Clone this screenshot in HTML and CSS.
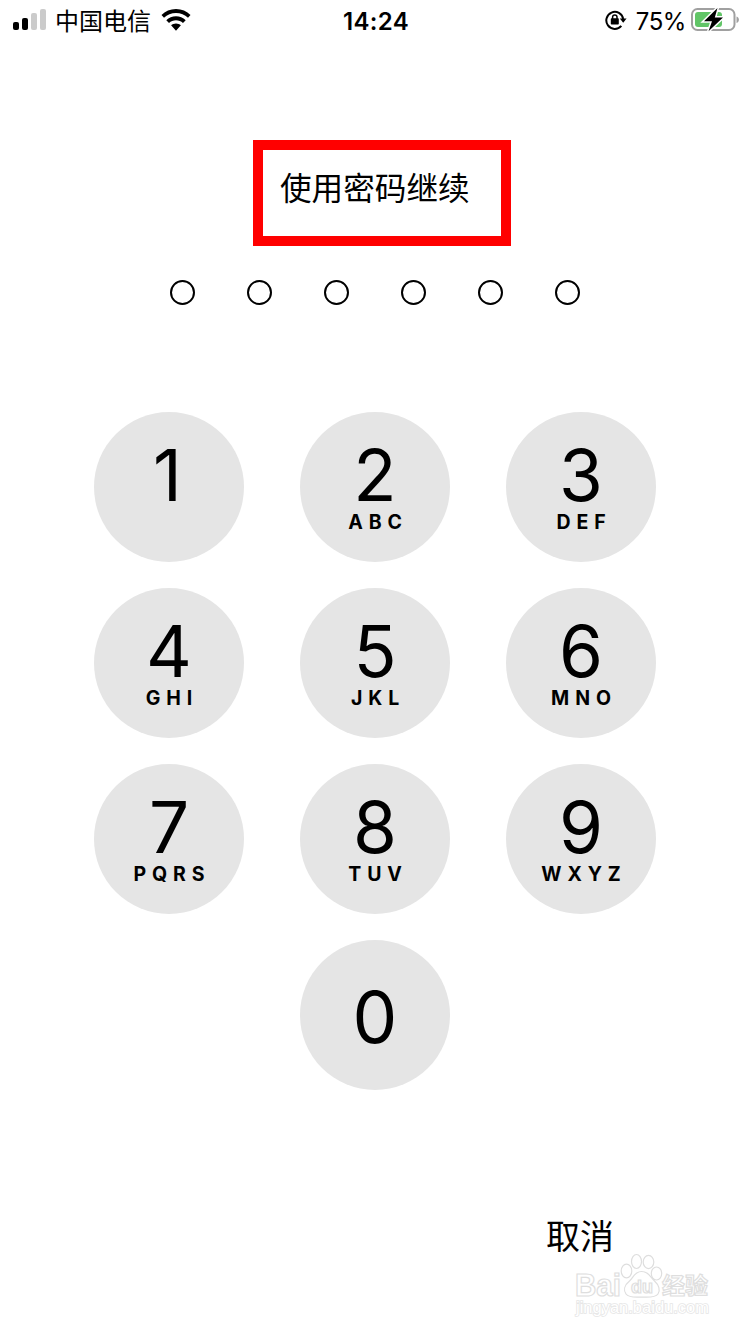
FILE: index.html
```
<!DOCTYPE html>
<html lang="zh-CN">
<head>
    <meta charset="UTF-8">
    <meta name="viewport" content="width=device-width, initial-scale=1.0">
    <title>使用密码继续</title>
    <link rel="stylesheet" href="styles.css">
</head>
<body>

    <header class="status-bar">
        <div class="status-left">
            <div class="signal">
                <span class="bar bar1"></span>
                <span class="bar bar2"></span>
                <span class="bar bar3 off"></span>
                <span class="bar bar4 off"></span>
            </div>
            <span class="carrier">中国电信</span>
            <svg class="wifi" width="30" height="22" viewBox="0 0 30 22">
                <path d="M15 0C9.300 0 4.200 2.200.5 5.900L3 8.800C6.200 5.600 10.400 3.900 15 3.900s8.800 1.700 12 4.900l2.500-2.900C25.800 2.200 20.700 0 15 0z"/>
                <path d="M15 7.300c-3.700 0-7.100 1.400-9.700 3.900L8 14c1.900-1.800 4.300-2.800 7-2.800s5.100 1 7 2.800l2.700-2.800C22.100 8.700 18.700 7.300 15 7.300z"/>
                <path d="M15 14.400c-1.900 0-3.600.7-4.900 1.900L15 21.700l4.900-5.400c-1.300-1.200-3-1.900-4.900-1.900z"/>
            </svg>
        </div>
        <div class="time">14:24</div>
        <div class="status-right">
            <svg class="lock" width="22" height="20" viewBox="0 0 22 20">
                <path d="M16.300 15.900A8.500 8.500 0 1 1 18.200 9" fill="none" stroke="#000" stroke-width="2"/>
                <path d="M14.800 8.400h6.800l-3.400 4.400z"/>
                <rect x="5.800" y="8.300" width="8" height="6.300" rx=".8"/>
                <path d="M7.600 9V7.100a2.200 2.200 0 0 1 4.400 0V9" fill="none" stroke="#000" stroke-width="1.500"/>
            </svg>
            <span class="percent">75%</span>
            <svg class="battery" width="48" height="26" viewBox="0 0 48 26">
                <rect x="1" y="2" width="42.500" height="21" rx="5.500" fill="none" stroke="#a0a0a0" stroke-width="2"/>
                <path d="M45.500 9.500c1.600.5 2.400 1.700 2.400 3.200s-.8 2.700-2.400 3.200z" fill="#a0a0a0"/>
                <rect x="4" y="5" width="27" height="15" rx="3" fill="#61c567"/>
                <path d="M26.500 1L13 14.200h8l-3.500 10L32 10.600h-8.200z" stroke="#fff" stroke-width="3" paint-order="stroke"/>
            </svg>
        </div>
    </header>

    <main class="container">
        <h1 class="title">使用密码继续</h1>

        <div class="dots">
            <span class="dot"></span>
            <span class="dot"></span>
            <span class="dot"></span>
            <span class="dot"></span>
            <span class="dot"></span>
            <span class="dot"></span>
        </div>

        <div class="keypad">
            <button class="key"><span class="num one">1</span></button>
            <button class="key"><span class="num">2</span><span class="letters">ABC</span></button>
            <button class="key"><span class="num">3</span><span class="letters">DEF</span></button>
            <button class="key"><span class="num">4</span><span class="letters">GHI</span></button>
            <button class="key"><span class="num">5</span><span class="letters">JKL</span></button>
            <button class="key"><span class="num">6</span><span class="letters">MNO</span></button>
            <button class="key"><span class="num">7</span><span class="letters">PQRS</span></button>
            <button class="key"><span class="num">8</span><span class="letters">TUV</span></button>
            <button class="key"><span class="num">9</span><span class="letters">WXYZ</span></button>
            <button class="key zero"><span class="num">0</span></button>
        </div>

        <button class="cancel-btn">取消</button>
    </main>

    <!-- 水印 -->
    <svg class="watermark" width="140" height="68" viewBox="0 0 140 68">
        <g class="mark">
            <text x="4" y="43" font-size="31" textLength="46" lengthAdjust="spacingAndGlyphs">Bai</text>
            <ellipse cx="55.500" cy="18" rx="5.300" ry="6.800"/>
            <ellipse cx="65.500" cy="8.500" rx="5" ry="7"/>
            <ellipse cx="77.500" cy="9" rx="5.300" ry="6.600"/>
            <ellipse cx="85.500" cy="20.500" rx="5.200" ry="6.500"/>
            <path d="M70.500 18.500c-7 0-8.500 6.500-12 9.500-5.500 4.500-6 9.500-3.500 13s8 3.500 15.500 3c7.500.5 14 .5 16.500-3s1-9-3.500-13-6-9.500-13-9.500z"/>
            <text x="60" y="40" font-size="18" textLength="22" lengthAdjust="spacingAndGlyphs">du</text>
            <text class="cjk" x="91" y="41" font-size="23">经验</text>
        </g>
        <text class="site" x="5" y="60" font-size="16" textLength="133" lengthAdjust="spacingAndGlyphs">jingyan.baidu.com</text>
    </svg>

</body>
</html>
```
FILE: styles.css
```
* {
    box-sizing: border-box;
}
body {
    margin: 0;
    height: 1334px;
    position: relative;
    overflow: hidden;
    background-color: #fff;
    color: #000;
    font-family: Inter, "Noto Sans CJK SC", sans-serif;
}
button {
    border: none;
    padding: 0;
    color: #000;
    font-family: inherit;
    cursor: pointer;
}

/* 状态栏 */
.status-bar {
    display: grid;
    grid-template-columns: 1fr auto 1fr;
    align-items: center;
    height: 40px;
    padding: 0 11px 0 13px;
    font-size: 24px;
    line-height: 36px;
}
.status-left, .status-right {
    display: flex;
    align-items: center;
}
.status-right {
    justify-content: flex-end;
}
.signal {
    display: flex;
    align-items: flex-end;
    gap: 3px;
    height: 21px;
    margin-bottom: 2px;
}
.bar {
    width: 6px;
    border-radius: 2px;
    background: #000;
}
.bar1 { height: 8px; }
.bar2 { height: 12px; }
.bar3 { height: 17px; }
.bar4 { height: 21px; }
.off {
    background: #cbcbcb;
}
.carrier {
    margin-left: 9px;
    padding-top: 4px;
}
.wifi {
    margin-left: 10px;
}
.time {
    padding-top: 3px;
    font-weight: 600;
    letter-spacing: 0.3px;
}
.percent {
    margin: 0 5px 0 9px;
    padding-top: 3px;
    letter-spacing: -0.4px;
}

.container {
    display: flex;
    flex-direction: column;
    align-items: center;
}
.title {
    width: 258px;
    height: 106px;
    margin: 100px 0 0 14px;
    padding: 15px 0 0 17px;
    border: 10px solid #f00;
    font-size: 31.6px;
    font-weight: 400;
    line-height: 48px;
    white-space: nowrap;
}
.dots {
    display: flex;
    gap: 52px;
    margin-top: 34px;
}
.dot {
    width: 25px;
    height: 25px;
    border: 2px solid #000;
    border-radius: 50%;
}

/* 数字键盘 */
.keypad {
    display: grid;
    grid-template-columns: repeat(3, 150px);
    gap: 26px 56px;
    margin-top: 107px;
}
.key {
    display: flex;
    flex-direction: column;
    align-items: center;
    height: 150px;
    padding-top: 28px;
    border-radius: 50%;
    background: #e5e5e5;
}
.num {
    font-size: 71px;
    line-height: 70px;
}
.one {
    margin-right: 3px;
}
.letters {
    margin-top: 2px;
    padding-left: 6px;
    font-size: 19.5px;
    font-weight: 700;
    line-height: 20px;
    letter-spacing: 5.9px;
}
.zero {
    grid-column: 2;
    padding-top: 42px;
}
.cancel-btn {
    align-self: flex-end;
    margin: 122px 136px 0 0;
    background: none;
    font-size: 34px;
    line-height: 50px;
}

.watermark {
    position: absolute;
    right: 39px;
    bottom: 13px;
    font-family: "Liberation Sans", sans-serif;
    font-weight: bold;
}
.mark {
    fill: #fff;
    stroke: #dedede;
    stroke-width: 1.2;
}
.cjk {
    font-family: "Noto Sans CJK SC", sans-serif;
}
.site {
    fill: #fff;
    stroke: #e6e6e6;
    stroke-width: 1.6;
    paint-order: stroke;
    font-weight: normal;
}
```
